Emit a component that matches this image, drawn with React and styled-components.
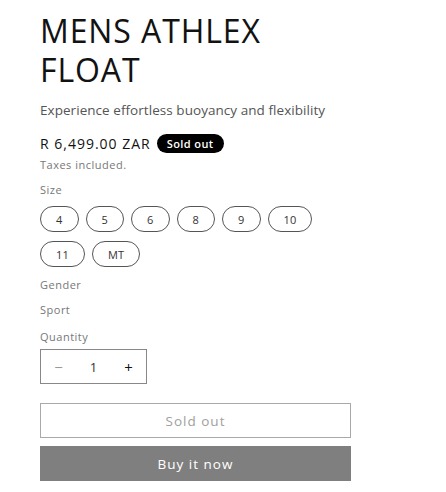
import styled, { createGlobalStyle } from "styled-components";

const GlobalStyle = createGlobalStyle`
  body {
    margin: 0;
    background: #fff;
    font-family: "Open Sans", "Liberation Sans", sans-serif;
    color: #121212;
  }
`;

const Page = styled.div`
  width: 311px;
  padding: 11px 0 0 40px;
  display: flex;
  flex-direction: column;
`;

const Title = styled.h1`
  margin: 0;
  font-size: 32px;
  line-height: 39px;
  font-weight: 400;
  letter-spacing: 0.9px;
  color: #121212;
`;

const Subtitle = styled.p`
  margin: 11px 0 0;
  font-size: 13.5px;
  line-height: 20px;
  letter-spacing: 0.05px;
  white-space: nowrap;
  color: #555;
`;

const PriceRow = styled.div`
  display: flex;
  align-items: center;
  gap: 6px;
  margin-top: 13px;
  height: 20px;
`;

const Price = styled.span`
  font-size: 14px;
  letter-spacing: 1px;
  color: #121212;
`;

const Badge = styled.span`
  background: #000;
  color: #fff;
  border-radius: 10px;
  height: 19px;
  padding: 0 10px;
  display: inline-flex;
  align-items: center;
  font-size: 11px;
  font-weight: 600;
  letter-spacing: 0.4px;
`;

const Label = styled.div`
  font-size: 11px;
  line-height: 15px;
  letter-spacing: 0.5px;
  color: #777;
  margin-top: ${(p) => p.$top}px;
`;

const Pills = styled.div`
  display: flex;
  flex-wrap: wrap;
  gap: 9px 7px;
  margin-top: 9px;
`;

const Pill = styled.span`
  height: 26px;
  box-sizing: border-box;
  border: 1px solid #555;
  border-radius: 13px;
  padding: 0 15px;
  display: inline-flex;
  align-items: center;
  justify-content: center;
  font-size: 11px;
  letter-spacing: 0.2px;
  color: #333;
`;

const Qty = styled.div`
  width: 107px;
  height: 35px;
  box-sizing: border-box;
  border: 1px solid #888;
  margin-top: 5px;
  display: grid;
  grid-template-columns: 1fr 1fr 1fr;
  align-items: center;
  justify-items: center;
  font-size: 13px;
  color: #333;
`;

const QtyBtn = styled.span`
  font-size: 15px;
  color: ${(p) => (p.$muted ? "#999" : "#121212")};
`;

const Button = styled.div`
  height: 35px;
  box-sizing: border-box;
  display: flex;
  align-items: center;
  justify-content: center;
  font-size: 13.5px;
  letter-spacing: 1px;
  margin-top: ${(p) => p.$top}px;
  border: ${(p) => (p.$filled ? "none" : "1px solid #a9a9a9")};
  background: ${(p) => (p.$filled ? "#7f7f7f" : "#fff")};
  color: ${(p) => (p.$filled ? "#fff" : "#a0a0a0")};
`;

const sizes = ["4", "5", "6", "8", "9", "10", "11", "MT"];

export default function App() {
  return (
    <>
      <GlobalStyle />
      <Page>
        <Title>
          MENS ATHLEX
          <br />
          FLOAT
        </Title>
        <Subtitle>Experience effortless buoyancy and flexibility</Subtitle>
        <PriceRow>
          <Price>R 6,499.00 ZAR</Price>
          <Badge>Sold out</Badge>
        </PriceRow>
        <Label $top={4}>Taxes included.</Label>
        <Label $top={10}>Size</Label>
        <Pills>
          {sizes.map((s) => (
            <Pill key={s}>{s}</Pill>
          ))}
        </Pills>
        <Label $top={10}>Gender</Label>
        <Label $top={10}>Sport</Label>
        <Label $top={12}>Quantity</Label>
        <Qty>
          <QtyBtn $muted>−</QtyBtn>
          <span>1</span>
          <QtyBtn>+</QtyBtn>
        </Qty>
        <Button $top={19}>Sold out</Button>
        <Button $top={8} $filled>
          Buy it now
        </Button>
      </Page>
    </>
  );
}
